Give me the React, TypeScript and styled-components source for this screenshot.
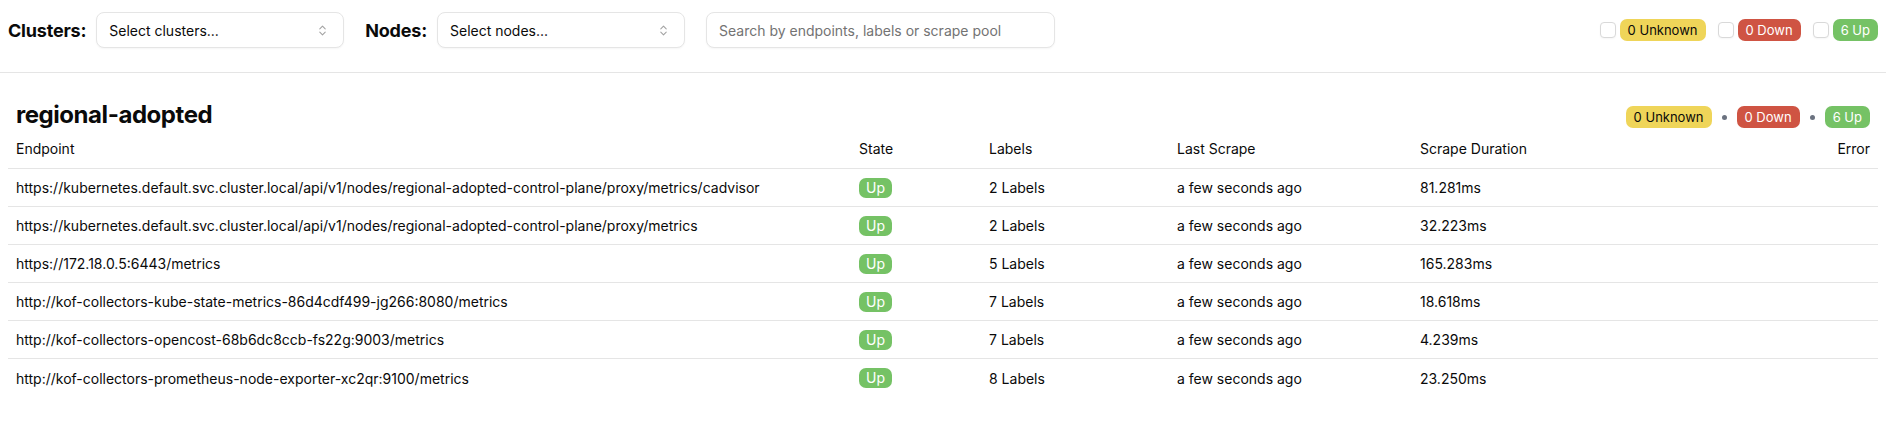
import styled, { createGlobalStyle } from "styled-components";
import { ChevronsUpDown } from "lucide-react";

const GlobalStyle = createGlobalStyle`
  html, body {
    margin: 0;
    padding: 0;
    background: #ffffff;
    color: #0a0a0a;
    font-family: Inter, "Noto Sans", "Liberation Sans", sans-serif;
  }
  * { box-sizing: border-box; }
`;

type Tone = "unknown" | "down" | "up";

const toneColors: Record<Tone, { bg: string; fg: string }> = {
  unknown: { bg: "#efd559", fg: "#0a0a0a" },
  down: { bg: "#cf5443", fg: "#ffffff" },
  up: { bg: "#75c265", fg: "#ffffff" },
};

const TopBar = styled.header`
  display: flex;
  align-items: center;
  padding: 12px 8px 24px;
  border-bottom: 1px solid #e5e5e5;
`;

const FilterGroup = styled.div`
  display: flex;
  align-items: center;
  gap: 10px;
  margin-right: 21px;
`;

const FilterLabel = styled.label`
  font-size: 18px;
  font-weight: 700;
  letter-spacing: -0.2px;
`;

const SelectBox = styled.button`
  display: flex;
  align-items: center;
  justify-content: space-between;
  width: 248px;
  height: 36px;
  padding: 0 14px 0 12px;
  border: 1px solid #e5e5e5;
  border-radius: 8px;
  background: #ffffff;
  box-shadow: 0 1px 2px rgba(0, 0, 0, 0.04);
  font-family: inherit;
  font-size: 14px;
  color: #0a0a0a;
  cursor: pointer;

  svg {
    color: #a3a3a3;
  }
`;

const SearchInput = styled.input`
  width: 349px;
  height: 36px;
  padding: 0 12px;
  border: 1px solid #e5e5e5;
  border-radius: 8px;
  box-shadow: 0 1px 2px rgba(0, 0, 0, 0.04);
  font-family: inherit;
  font-size: 14px;
  color: #0a0a0a;
  outline: none;

  &::placeholder {
    color: #737373;
  }
`;

const StateFilters = styled.div`
  display: flex;
  align-items: center;
  gap: 12px;
  margin-left: auto;
`;

const StateToggle = styled.label`
  display: flex;
  align-items: center;
  gap: 4px;
`;

const CheckBox = styled.span`
  width: 16px;
  height: 16px;
  border: 1px solid #d9d9d9;
  border-radius: 4px;
  background: #ffffff;
  box-shadow: 0 1px 2px rgba(0, 0, 0, 0.04);
`;

const Badge = styled.span<{ $tone: Tone; $small?: boolean }>`
  display: inline-flex;
  align-items: center;
  height: ${(p) => (p.$small ? "20px" : "22px")};
  padding: 0 ${(p) => (p.$small ? "7px" : "8px")};
  border-radius: 7px;
  background: ${(p) => toneColors[p.$tone].bg};
  color: ${(p) => toneColors[p.$tone].fg};
  font-size: ${(p) => (p.$small ? "14px" : "13px")};
  line-height: 1;
  white-space: nowrap;
`;

const Section = styled.section`
  padding: 28px 8px 0;
`;

const SectionHead = styled.div`
  display: flex;
  align-items: flex-end;
  justify-content: space-between;
  padding: 0 8px;
`;

const Title = styled.h2`
  margin: 0;
  font-size: 24px;
  line-height: 28px;
  font-weight: 700;
  letter-spacing: -0.45px;
`;

const Summary = styled.div`
  display: flex;
  align-items: center;
  gap: 10px;
  padding-bottom: 1px;
`;

const Dot = styled.span`
  width: 5px;
  height: 5px;
  border-radius: 50%;
  background: #6b7280;
`;

const Table = styled.div`
  display: grid;
  grid-template-columns: 843px 130px 188px 243px 1fr auto;
  font-size: 14px;
`;

const Row = styled.div<{ $head?: boolean }>`
  display: contents;

  & > div {
    display: flex;
    align-items: center;
    padding: 0 8px;
    height: ${(p) => (p.$head ? "40px" : "38px")};
    border-bottom: 1px solid #e5e5e5;
    white-space: nowrap;
  }

  &:last-child > div {
    border-bottom: none;
  }
`;

const Cell = styled.div<{ $right?: boolean }>`
  justify-content: ${(p) => (p.$right ? "flex-end" : "flex-start")};
`;

const targets = [
  {
    endpoint:
      "https://kubernetes.default.svc.cluster.local/api/v1/nodes/regional-adopted-control-plane/proxy/metrics/cadvisor",
    labels: 2,
    duration: "81.281ms",
  },
  {
    endpoint:
      "https://kubernetes.default.svc.cluster.local/api/v1/nodes/regional-adopted-control-plane/proxy/metrics",
    labels: 2,
    duration: "32.223ms",
  },
  { endpoint: "https://172.18.0.5:6443/metrics", labels: 5, duration: "165.283ms" },
  {
    endpoint: "http://kof-collectors-kube-state-metrics-86d4cdf499-jg266:8080/metrics",
    labels: 7,
    duration: "18.618ms",
  },
  {
    endpoint: "http://kof-collectors-opencost-68b6dc8ccb-fs22g:9003/metrics",
    labels: 7,
    duration: "4.239ms",
  },
  {
    endpoint: "http://kof-collectors-prometheus-node-exporter-xc2qr:9100/metrics",
    labels: 8,
    duration: "23.250ms",
  },
];

function App() {
  return (
    <>
      <GlobalStyle />
      <TopBar>
        <FilterGroup>
          <FilterLabel>Clusters:</FilterLabel>
          <SelectBox>
            Select clusters...
            <ChevronsUpDown size={13} strokeWidth={2} />
          </SelectBox>
        </FilterGroup>
        <FilterGroup>
          <FilterLabel>Nodes:</FilterLabel>
          <SelectBox>
            Select nodes...
            <ChevronsUpDown size={13} strokeWidth={2} />
          </SelectBox>
        </FilterGroup>
        <SearchInput placeholder="Search by endpoints, labels or scrape pool" />
        <StateFilters>
          <StateToggle>
            <CheckBox />
            <Badge $tone="unknown">0 Unknown</Badge>
          </StateToggle>
          <StateToggle>
            <CheckBox />
            <Badge $tone="down">0 Down</Badge>
          </StateToggle>
          <StateToggle>
            <CheckBox />
            <Badge $tone="up">6 Up</Badge>
          </StateToggle>
        </StateFilters>
      </TopBar>

      <Section>
        <SectionHead>
          <Title>regional-adopted</Title>
          <Summary>
            <Badge $tone="unknown">0 Unknown</Badge>
            <Dot />
            <Badge $tone="down">0 Down</Badge>
            <Dot />
            <Badge $tone="up">6 Up</Badge>
          </Summary>
        </SectionHead>
        <Table>
          <Row $head>
            <Cell>Endpoint</Cell>
            <Cell>State</Cell>
            <Cell>Labels</Cell>
            <Cell>Last Scrape</Cell>
            <Cell>Scrape Duration</Cell>
            <Cell $right>Error</Cell>
          </Row>
          {targets.map((t) => (
            <Row key={t.endpoint}>
              <Cell>{t.endpoint}</Cell>
              <Cell>
                <Badge $tone="up" $small>
                  Up
                </Badge>
              </Cell>
              <Cell>{t.labels} Labels</Cell>
              <Cell>a few seconds ago</Cell>
              <Cell>{t.duration}</Cell>
              <Cell $right />
            </Row>
          ))}
        </Table>
      </Section>
    </>
  );
}

export default App;
